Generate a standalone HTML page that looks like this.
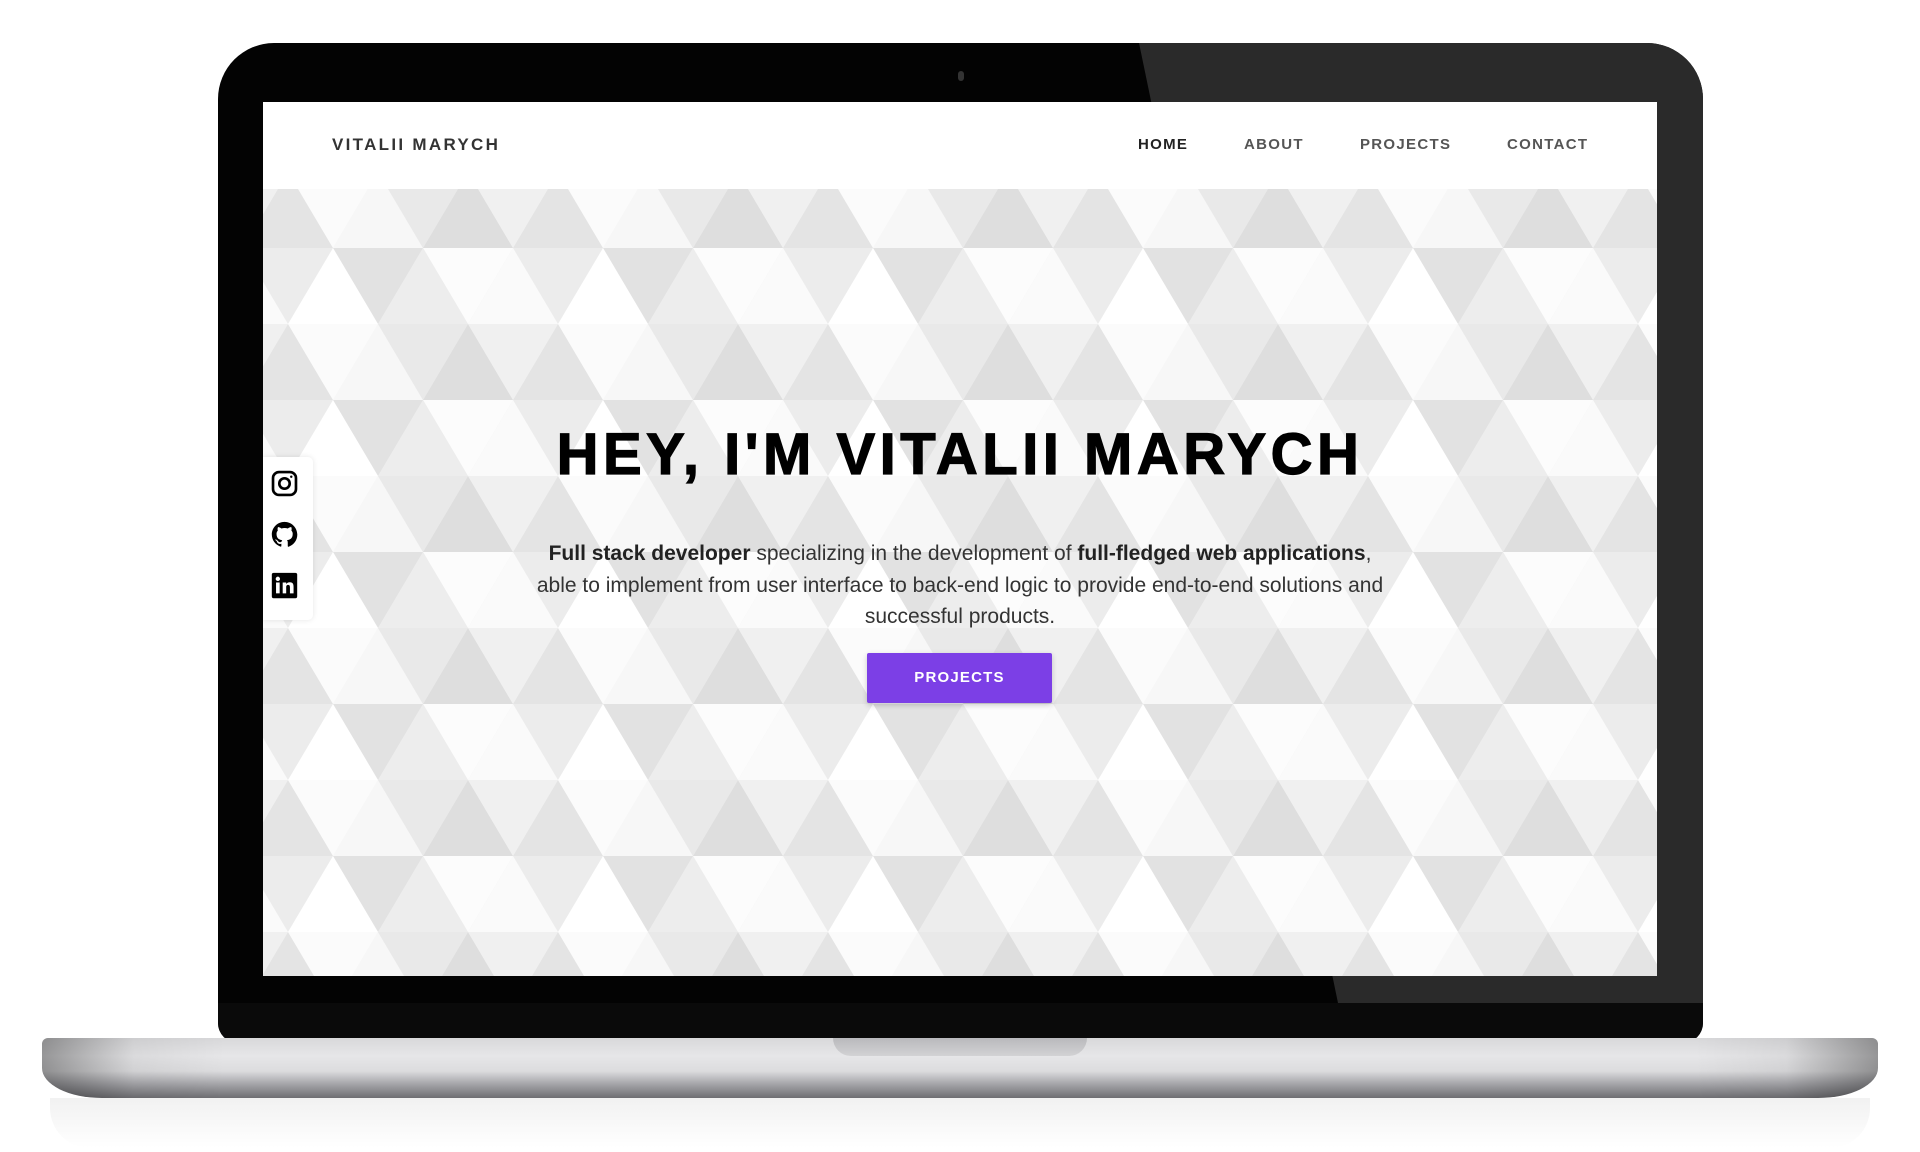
<!DOCTYPE html>
<html><head><meta charset="utf-8"><style>
*{margin:0;padding:0;box-sizing:border-box}
body{width:1920px;height:1152px;background:#fff;position:relative;overflow:hidden;font-family:"Liberation Sans",Arial,sans-serif}
.shadow{position:absolute;left:50px;top:1098px;width:1820px;height:50px;background:linear-gradient(#eee,#fff);border-radius:0 0 40px 40px;opacity:.8}
.base{position:absolute;left:42px;top:1038px;width:1836px;height:60px;border-radius:6px 6px 60px 60px/6px 6px 30px 30px;
background:linear-gradient(#d8d8da 0%,#e6e6e8 30%,#dcdcde 55%,#a9a9ad 75%,#6e6e72 100%);overflow:hidden}
.base:before{content:"";position:absolute;inset:0;background:linear-gradient(90deg,rgba(0,0,0,.35) 0,rgba(0,0,0,.05) 5%,rgba(0,0,0,0) 10%,rgba(0,0,0,0) 90%,rgba(0,0,0,.05) 95%,rgba(0,0,0,.35) 100%)}
.notch{position:absolute;left:833px;top:1038px;width:254px;height:18px;border-radius:0 0 18px 18px;background:linear-gradient(#b9b9bc,#d2d2d4);}
.bezel{position:absolute;left:218px;top:43px;width:1485px;height:1000px;border-radius:56px 56px 20px 20px;background:#030303;overflow:hidden}
.refl{position:absolute;left:0;top:0;width:100%;height:100%;background:#2a2a2a;clip-path:polygon(921px 0,1485px 0,1485px 960px,1120px 960px)}
.chin{position:absolute;left:0;top:960px;width:100%;height:40px;background:#0a0a0a}
.cam{position:absolute;left:740px;top:28px;width:6px;height:10px;border-radius:3px;background:#333}
.screen{position:absolute;left:263px;top:102px;width:1394px;height:874px;background:#f2f2f2;overflow:hidden}
.nav{position:absolute;left:0;top:0;width:100%;height:87px;background:#fff}
.logo{position:absolute;left:69px;top:33px;font-size:17px;font-weight:bold;letter-spacing:2.3px;color:#333}
.nav a{position:absolute;top:34px;font-size:15px;letter-spacing:1.3px;color:#555;font-weight:bold;text-decoration:none}
.hero{position:absolute;left:0;top:87px;width:100%;height:787px}
h1{position:absolute;left:0;width:100%;top:232px;text-align:center;font-size:58px;letter-spacing:4.5px;font-weight:900;color:#000;-webkit-text-stroke:1.2px #000}
p{position:absolute;left:257px;width:880px;top:349px;text-align:center;font-size:21px;line-height:31.5px;color:#333}
p b{color:#222}
.btn{position:absolute;left:604px;top:464px;width:185px;height:50px;background:#7c3fe6;color:#fff;font-weight:bold;font-size:15px;letter-spacing:1.2px;text-align:center;line-height:50px;border-radius:2px;box-shadow:0 2px 6px rgba(0,0,0,.2)}
.soc{position:absolute;left:0;top:268px;width:50px;height:163px;background:#fff;border-radius:0 5px 5px 0;box-shadow:0 0 6px rgba(0,0,0,.1)}
.soc svg{position:absolute;left:7px;width:29px;height:29px}
</style></head><body>
<div class="shadow"></div>
<div class="bezel"><div class="refl"></div><div class="chin"></div><div class="cam"></div></div>
<div class="base"></div>
<div class="notch"></div>
<div class="screen">
 <div class="hero">
  <svg width="1394" height="787" style="position:absolute;left:0;top:0">
   <defs><pattern id="t" width="270" height="152" patternUnits="userSpaceOnUse" x="-20" y="-17">
    <rect width="270" height="152" fill="#f2f2f2"/>
    <polygon points="0,76 45,0 90,76" fill="#e4e4e4"/>
    <polygon points="90,76 135,0 180,76" fill="#f7f7f7"/>
    <polygon points="180,76 225,0 270,76" fill="#dedede"/>
    <polygon points="45,0 135,0 90,76" fill="#fbfbfb"/>
    <polygon points="135,0 225,0 180,76" fill="#e9e9e9"/>
    <polygon points="225,0 315,0 270,76" fill="#f0f0f0"/>
    <polygon points="-45,0 45,0 0,76" fill="#f0f0f0"/>
    <polygon points="0,76 90,76 45,152" fill="#ececec"/>
    <polygon points="90,76 180,76 135,152" fill="#e2e2e2"/>
    <polygon points="180,76 270,76 225,152" fill="#fcfcfc"/>
    <polygon points="-45,152 0,76 45,152" fill="#fafafa"/>
    <polygon points="45,152 90,76 135,152" fill="#ffffff"/>
    <polygon points="135,152 180,76 225,152" fill="#ededed"/>
    <polygon points="225,152 270,76 315,152" fill="#fafafa"/>
   </pattern></defs>
   <rect width="1394" height="787" fill="url(#t)"/>
  </svg>
  <h1>HEY, I'M VITALII MARYCH</h1>
  <p><b>Full stack developer</b> specializing in the development of <b>full-fledged web applications</b>,<br>able to implement from user interface to back-end logic to provide end-to-end solutions and successful products.</p>
  <div class="btn">PROJECTS</div>
  <div class="soc">
   <svg style="top:12px" viewBox="0 0 24 24" fill="none" stroke="#000" stroke-width="2.2"><rect x="2.5" y="2.5" width="19" height="19" rx="5"/><circle cx="12" cy="12" r="4.3"/><circle cx="17.6" cy="6.4" r="1" fill="#000" stroke="none"/></svg>
   <svg style="top:63px" viewBox="0 0 24 24"><path fill="#000" d="M12 1.5C6.2 1.5 1.5 6.2 1.5 12c0 4.6 3 8.6 7.200 10 .5.1.7-.2.7-.5v-1.8c-2.9.6-3.5-1.4-3.5-1.4-.5-1.2-1.2-1.5-1.2-1.5-1-.7.1-.7.1-.7 1 .1 1.6 1.1 1.6 1.1.9 1.6 2.5 1.2 3.1.9.1-.7.4-1.2.7-1.4-2.3-.3-4.8-1.2-4.8-5.2 0-1.1.4-2.1 1.1-2.8-.1-.3-.5-1.3.1-2.8 0 0 .9-.3 2.9 1.1a10 10 0 0 1 5.2 0c2-1.4 2.9-1.1 2.9-1.1.6 1.5.2 2.5.1 2.8.7.7 1.1 1.7 1.1 2.8 0 4-2.5 4.9-4.8 5.2.4.3.7 1 .7 2v2.9c0 .3.2.6.7.5 4.2-1.4 7.2-5.4 7.2-10C22.5 6.2 17.8 1.5 12 1.5z"/></svg>
   <svg style="top:114px" viewBox="0 0 24 24"><rect x="1.5" y="1.5" width="21" height="21" rx="1.5" fill="#000"/><rect x="5" y="9.5" width="3" height="9" fill="#fff"/><circle cx="6.5" cy="6.5" r="1.8" fill="#fff"/><path fill="#fff" d="M10.5 9.5h2.9v1.3c.5-.9 1.6-1.5 3-1.5 2.6 0 3.1 1.7 3.1 3.9v5.3h-3v-4.7c0-1.1-.1-2.3-1.5-2.3s-1.6 1-1.6 2.2v4.8h-2.9z"/></svg>
  </div>
 </div>
 <div class="nav">
  <div class="logo">VITALII MARYCH</div>
  <a style="left:875px;color:#222">HOME</a>
  <a style="left:981px">ABOUT</a>
  <a style="left:1097px">PROJECTS</a>
  <a style="left:1244px">CONTACT</a>
 </div>
</div>
</body></html>
